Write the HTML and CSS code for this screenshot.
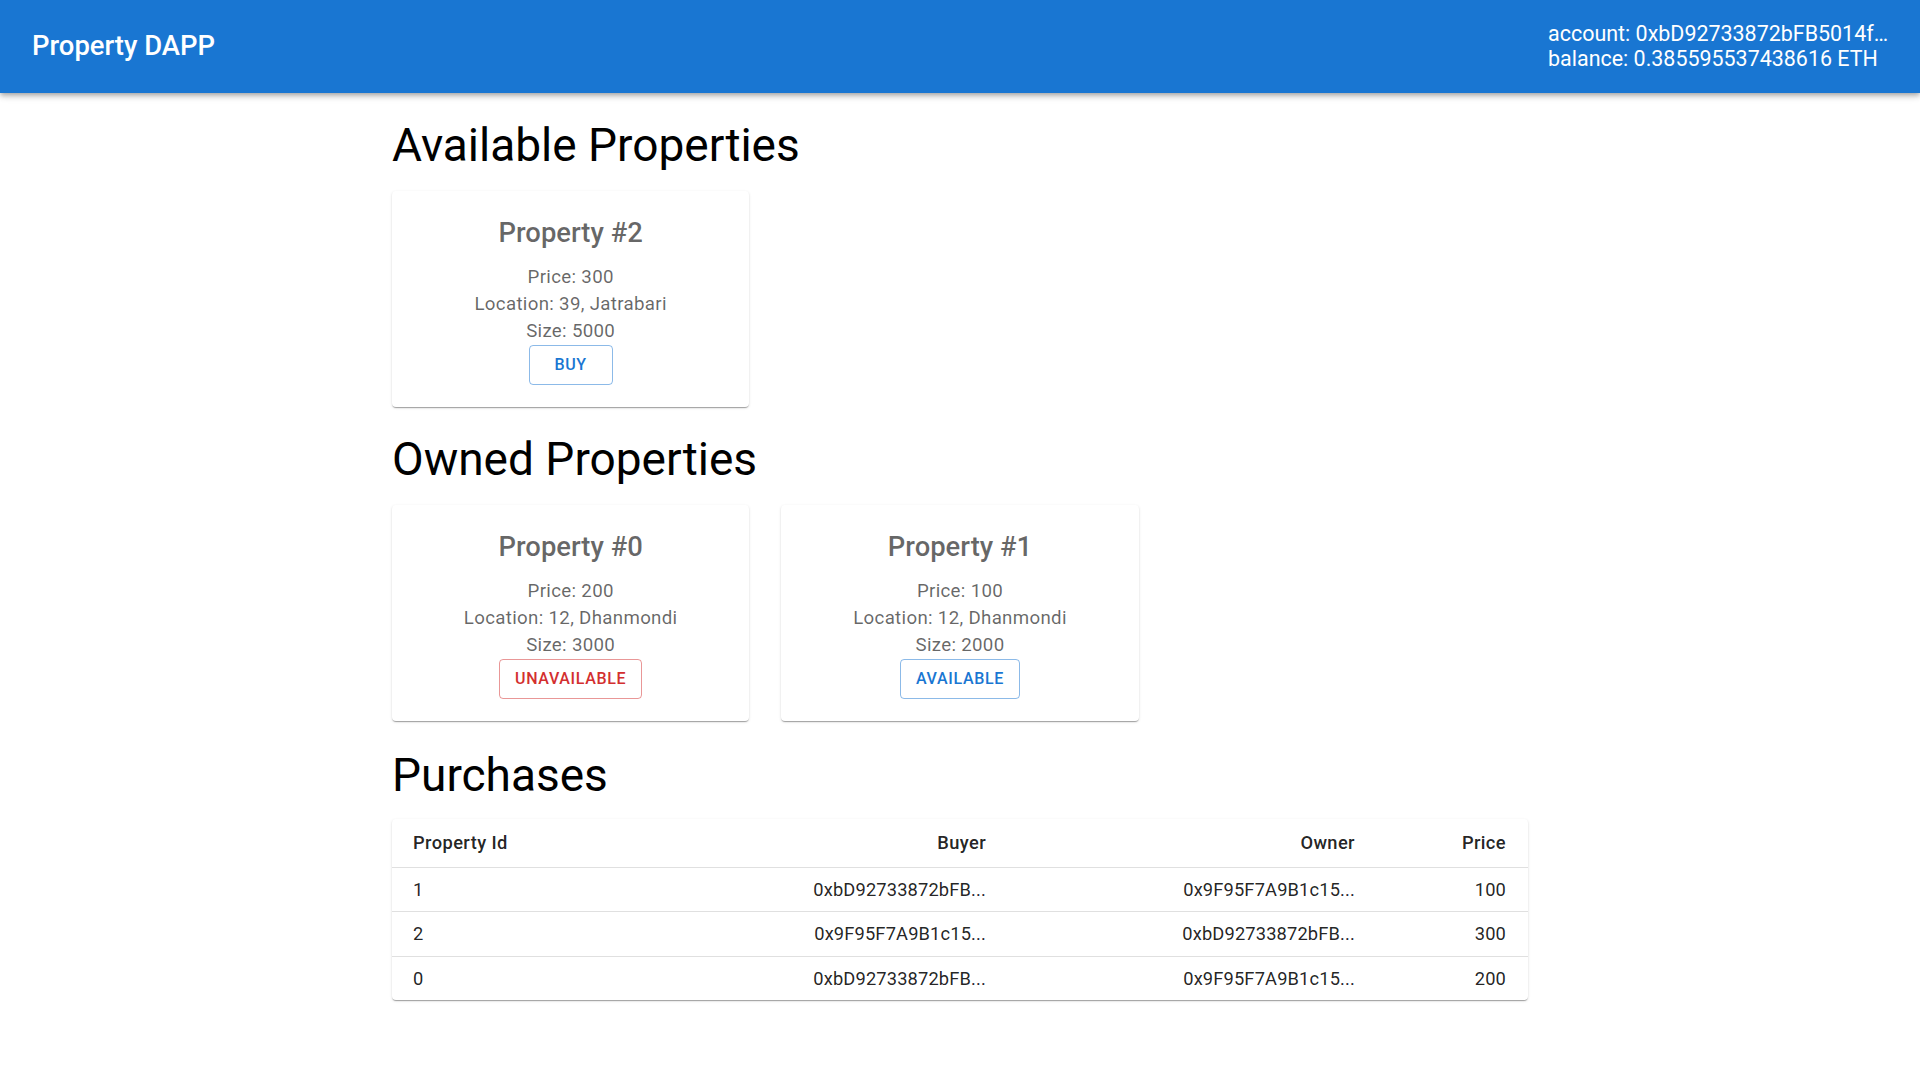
FILE: index.html
```html
<!DOCTYPE html>
<html lang="en">
<head>
<meta charset="utf-8">
<title>Property DAPP</title>
<link rel="stylesheet" href="styles.css">
</head>
<body>
<header class="appbar">
  <div class="brand">Property DAPP</div>
  <div class="account">
    <div>account: 0xbD92733872bFB5014f…</div>
    <div>balance: 0.385595537438616 ETH</div>
  </div>
</header>
<main class="container">
  <h3 class="section-title">Available Properties</h3>
  <div class="grid">
    <div class="card">
      <h5 class="card-title">Property #2</h5>
      <p class="card-line">Price: 300</p>
      <p class="card-line">Location: 39, Jatrabari</p>
      <p class="card-line">Size: 5000</p>
      <button class="btn btn-primary btn-min">Buy</button>
    </div>
  </div>

  <h3 class="section-title">Owned Properties</h3>
  <div class="grid">
    <div class="card">
      <h5 class="card-title">Property #0</h5>
      <p class="card-line">Price: 200</p>
      <p class="card-line">Location: 12, Dhanmondi</p>
      <p class="card-line">Size: 3000</p>
      <button class="btn btn-error">Unavailable</button>
    </div>
    <div class="card">
      <h5 class="card-title">Property #1</h5>
      <p class="card-line">Price: 100</p>
      <p class="card-line">Location: 12, Dhanmondi</p>
      <p class="card-line">Size: 2000</p>
      <button class="btn btn-primary">Available</button>
    </div>
  </div>

  <h3 class="section-title section-title-last">Purchases</h3>
  <div class="table-paper">
    <table class="table">
      <colgroup>
        <col class="col-id">
        <col class="col-buyer">
        <col class="col-owner">
        <col class="col-price">
      </colgroup>
      <thead>
        <tr>
          <th class="left">Property Id</th>
          <th class="right">Buyer</th>
          <th class="right">Owner</th>
          <th class="right">Price</th>
        </tr>
      </thead>
      <tbody>
        <tr>
          <td class="left">1</td>
          <td class="right">0xbD92733872bFB...</td>
          <td class="right">0x9F95F7A9B1c15...</td>
          <td class="right">100</td>
        </tr>
        <tr>
          <td class="left">2</td>
          <td class="right">0x9F95F7A9B1c15...</td>
          <td class="right">0xbD92733872bFB...</td>
          <td class="right">300</td>
        </tr>
        <tr>
          <td class="left">0</td>
          <td class="right">0xbD92733872bFB...</td>
          <td class="right">0x9F95F7A9B1c15...</td>
          <td class="right">200</td>
        </tr>
      </tbody>
    </table>
  </div>
</main>
</body>
</html>
```

FILE: styles.css
```css
* { box-sizing: border-box; }

html, body {
  margin: 0;
  padding: 0;
  background: #ffffff;
  font-family: Roboto, "Helvetica", Arial, sans-serif;
  color: rgba(0, 0, 0, 0.87);
}

.appbar {
  height: 93px;
  background: #1976d2;
  color: #ffffff;
  display: flex;
  align-items: center;
  justify-content: space-between;
  padding: 0 32px;
  box-shadow: 0px 2px 4px -1px rgba(0,0,0,0.2), 0px 4px 5px 0px rgba(0,0,0,0.14), 0px 1px 10px 0px rgba(0,0,0,0.12);
  position: relative;
  z-index: 2;
}

.brand {
  font-size: 27.43px;
  font-weight: 500;
  line-height: 36.6px;
  letter-spacing: 0;
}

.account {
  font-size: 21.45px;
  line-height: 24.6px;
  font-weight: 400;
  white-space: nowrap;
}

.container {
  max-width: 1200px;
  margin: 0 auto;
  padding: 0 32px 40px;
}

.section-title {
  font-size: 46px;
  font-weight: 400;
  line-height: 53.7px;
  margin: 26.4px 0 18px;
  color: #000000;
  letter-spacing: 0;
}

.section-title-last {
  margin-top: 28px;
  margin-bottom: 16.6px;
}

.grid {
  display: grid;
  grid-template-columns: repeat(3, 1fr);
  column-gap: 32px;
}

.card {
  background: #ffffff;
  border-radius: 4px;
  box-shadow: 0px 2px 1px -1px rgba(0,0,0,0.2), 0px 1px 1px 0px rgba(0,0,0,0.14), 0px 1px 3px 0px rgba(0,0,0,0.12);
  padding: 24px 16px 22px;
  display: flex;
  flex-direction: column;
  align-items: center;
  text-align: center;
  height: 216px;
}

.card-title {
  margin: 0 0 12.4px;
  font-size: 27.43px;
  line-height: 36.6px;
  font-weight: 500;
  color: rgba(0, 0, 0, 0.6);
}

.card-line {
  margin: 0;
  font-size: 18.7px;
  line-height: 26.8px;
  letter-spacing: 0.32px;
  color: rgba(0, 0, 0, 0.6);
}

.btn {
  margin-top: 0.6px;
  font-family: Roboto, "Helvetica", Arial, sans-serif;
  font-size: 16px;
  font-weight: 500;
  line-height: 28px;
  letter-spacing: 0.66px;
  text-transform: uppercase;
  padding: 5px 15px;
  border-radius: 4px;
  background: transparent;
  cursor: pointer;
  min-width: 64px;
}

.btn-min { min-width: 84px; }

.btn-primary {
  color: #1976d2;
  border: 1px solid rgba(25, 118, 210, 0.5);
}

.btn-error {
  color: #d32f2f;
  border: 1px solid rgba(211, 47, 47, 0.5);
}

.table-paper {
  background: #ffffff;
  border-radius: 4px;
  box-shadow: 0px 2px 1px -1px rgba(0,0,0,0.2), 0px 1px 1px 0px rgba(0,0,0,0.14), 0px 1px 3px 0px rgba(0,0,0,0.12);
  overflow: hidden;
}

.table {
  width: 100%;
  border-collapse: collapse;
  table-layout: fixed;
}

.col-id { width: 300px; }
.col-buyer { width: 316px; }
.col-owner { width: 369px; }
.col-price { width: 151px; }

.table th,
.table td {
  font-size: 18.29px;
  line-height: 27.4px;
  padding: 8px 22px 8px 21px;
  border-bottom: 1px solid rgba(224, 224, 224, 1);
  color: rgba(0, 0, 0, 0.87);
  letter-spacing: 0.15px;
  white-space: nowrap;
}

.table th {
  font-weight: 500;
  padding-top: 10px;
  padding-bottom: 10px;
  letter-spacing: 0.4px;
}

.table td { font-weight: 400; }

.table tbody tr:last-child td { border-bottom: none; }

.left { text-align: left; }
.right { text-align: right; }
```
